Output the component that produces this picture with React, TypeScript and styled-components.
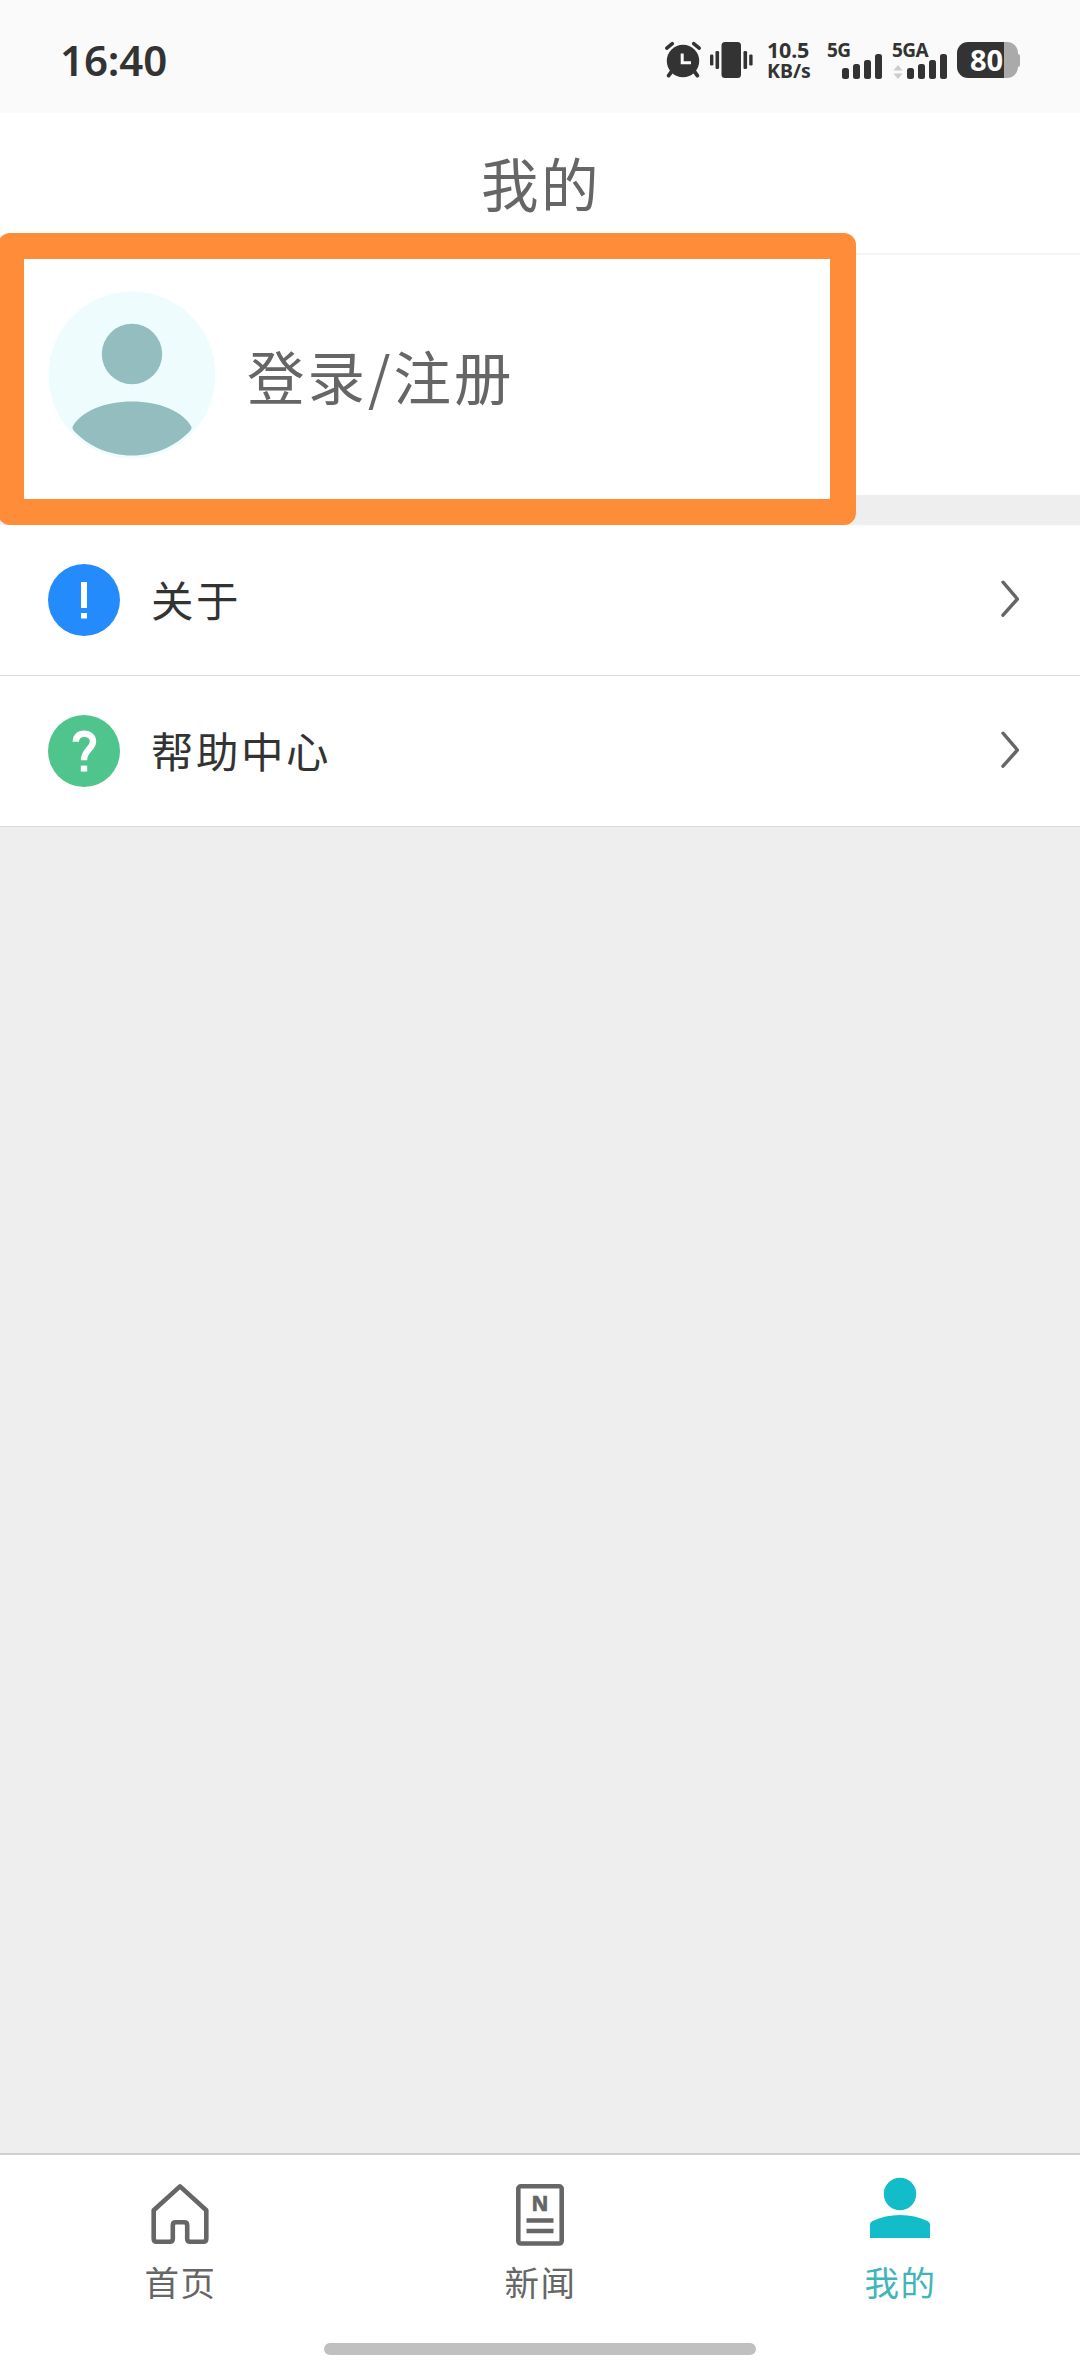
import React from 'react';
import styled, { createGlobalStyle } from 'styled-components';

const GlobalStyle = createGlobalStyle`
  * { box-sizing: border-box; }
  body {
    margin: 0;
    background: #eeeeee;
    font-family: 'Noto Sans CJK SC', 'Noto Sans', sans-serif;
  }
`;

const Screen = styled.div`
  display: flex;
  flex-direction: column;
  width: 1080px;
  height: 2376px;
  background: #eeeeee;
  overflow: hidden;
`;

const StatusBar = styled.div`
  display: flex;
  align-items: center;
  justify-content: space-between;
  height: 113px;
  padding: 7px 60px 0 60px;
  background: #fafafa;
  color: #333333;
  font-family: 'Noto Sans', sans-serif;
`;

const Clock = styled.div`
  font-size: 42px;
  font-weight: 600;
  line-height: 60px;
  letter-spacing: -0.1px;
`;

const StatusIcons = styled.div`
  display: flex;
  align-items: center;
  height: 38px;
`;

const NetSpeed = styled.div`
  display: flex;
  flex-direction: column;
  width: 46px;
  margin-left: 14px;
  font-size: 19.5px;
  font-weight: 700;
  line-height: 21px;
  white-space: nowrap;
`;

const SpeedValue = styled.span`
  font-size: 21.5px;
  letter-spacing: -0.2px;
`;

const Signal = styled.div<{ $width: number; $gap: number }>`
  display: flex;
  flex-direction: column;
  width: ${(p) => p.$width}px;
  height: 38px;
  margin-left: ${(p) => p.$gap}px;
`;

const SignalLabel = styled.span`
  height: 11px;
  font-size: 19px;
  font-weight: 700;
  line-height: 18px;
  letter-spacing: -0.5px;
`;

const SignalBars = styled.div`
  display: flex;
  justify-content: flex-end;
  align-items: flex-end;
  gap: 4px;
  height: 27px;
`;

const Bar = styled.span<{ $height: number }>`
  width: 7px;
  height: ${(p) => p.$height}px;
  border-radius: 2.5px;
  background: #333333;
`;

const Battery = styled.div`
  display: flex;
  align-items: center;
  margin-left: 10px;
`;

const BatteryBody = styled.div`
  display: flex;
  align-items: center;
  justify-content: center;
  width: 61px;
  height: 36px;
  padding-right: 2px;
  border-radius: 11px;
  background: linear-gradient(to right, #333333 47px, #aaaaaa 47px);
  color: #ffffff;
  font-size: 29px;
  font-weight: 700;
  line-height: 36px;
`;

const BatteryCap = styled.span`
  width: 2px;
  height: 13px;
  border-radius: 0 2px 2px 0;
  background: #aaaaaa;
`;

const TitleBar = styled.header`
  display: flex;
  align-items: center;
  justify-content: center;
  height: 142px;
  padding: 0 0 2px 2px;
  border-bottom: 2px solid #f4f4f4;
  background: #ffffff;
  color: #666666;
  font-size: 57.5px;
  line-height: 84px;
  letter-spacing: 2.5px;
`;

const Profile = styled.section`
  position: relative;
  isolation: isolate;
  display: flex;
  align-items: center;
  height: 240px;
  padding: 0 48px;
  background: #ffffff;
`;

const ProfileName = styled.span`
  margin-left: 31px;
  color: #666666;
  font-size: 57.5px;
  line-height: 84px;
  letter-spacing: 3px;
`;

const Highlight = styled.div`
  position: absolute;
  z-index: -1;
  top: -22px;
  left: -2px;
  width: 858px;
  height: 292px;
  border: 26.5px solid #ff8c38;
  border-radius: 12px;
  background: #ffffff;
`;

const Menu = styled.nav`
  display: flex;
  flex-direction: column;
  margin-top: 30px;
`;

const MenuRow = styled.a`
  display: flex;
  align-items: center;
  height: 151px;
  padding: 0 60px 0 48px;
  border-bottom: 1.5px solid #dcdcdc;
  background: #ffffff;
  color: #333333;
`;

const MenuLabel = styled.span`
  flex: 1;
  margin-left: 31px;
  padding-bottom: 2px;
  font-size: 42.5px;
  line-height: 60px;
  letter-spacing: 2.5px;
`;

const TabBar = styled.footer`
  display: grid;
  grid-template-columns: repeat(3, 1fr);
  grid-template-rows: 188px 12px;
  height: 223px;
  margin-top: auto;
  border-top: 2px solid #cfcfcf;
  background: #ffffff;
`;

const Tab = styled.a<{ $active?: boolean }>`
  display: flex;
  flex-direction: column;
  align-items: center;
  padding-top: 21px;
  color: ${(p) => (p.$active ? '#12bcc8' : '#666666')};
`;

const TabLabel = styled.span<{ $active?: boolean }>`
  margin-top: 8px;
  padding-left: 1px;
  color: ${(p) => (p.$active ? '#3fb5b8' : '#666666')};
  font-size: 34.5px;
  line-height: 50px;
  letter-spacing: 1.5px;
`;

const HomeIndicator = styled.div`
  grid-column: 1 / -1;
  justify-self: center;
  width: 432px;
  height: 12px;
  border-radius: 6px;
  background: #c0c0c0;
`;

const AlarmIcon = () => (
  <svg width="38" height="38" viewBox="0 0 38 38">
    <g stroke="#333" strokeLinecap="round" fill="none">
      <path d="M2.8 7.2L8.3 2.6M35.2 7.2L29.7 2.6" strokeWidth="3.6" />
      <path d="M8 30L4.6 34.6M30 30L33.4 34.6" strokeWidth="3.8" />
    </g>
    <circle cx="19" cy="20" r="16.2" fill="#333" />
    <path d="M18.2 12.5V21.8H27" fill="none" stroke="#fafafa" strokeWidth="3" />
  </svg>
);

const VibrateSvg = styled.svg`
  margin-left: 7px;
`;

const VibrateIcon = () => (
  <VibrateSvg width="44" height="38" viewBox="0 0 44 38">
    <g fill="#333">
      <rect x="12.5" y="1" width="19.5" height="36" rx="3.5" />
      <rect x="6.5" y="10" width="3.6" height="18" rx="1.3" />
      <rect x="1" y="13.5" width="3.4" height="11" rx="1.3" />
      <rect x="34.5" y="10" width="3.6" height="18" rx="1.3" />
      <rect x="40.2" y="13.5" width="3.4" height="11" rx="1.3" />
    </g>
  </VibrateSvg>
);

const DataArrows = () => (
  <svg width="10" height="14" viewBox="0 0 10 14">
    <path d="M5 0L9.6 5.6H0.4ZM5 14L9.6 8.4H0.4Z" fill="#cccccc" />
  </svg>
);

const Avatar = () => (
  <svg width="168" height="168" viewBox="0 0 168 168">
    <circle cx="84" cy="84" r="83.5" fill="#effcfd" />
    <circle cx="84" cy="63" r="30.2" fill="#94bdc0" />
    <path
      d="M24.5 136C33 120 57 110.5 84 110.5S135 120 143.5 136Q144 138 142 140C128 155 107 164.5 84 164.5S40 155 26 140Q24 138 24.5 136Z"
      fill="#94bdc0"
    />
  </svg>
);

const AboutIcon = () => (
  <svg width="72" height="72" viewBox="0 0 72 72">
    <circle cx="36" cy="36" r="36" fill="#238bfc" />
    <path d="M33 18H39V44H33ZM33 49H39V54.500H33Z" fill="#fff" />
  </svg>
);

const HelpIcon = () => (
  <svg width="72" height="72" viewBox="0 0 72 72">
    <circle cx="36" cy="36" r="36" fill="#4fc48c" />
    <path
      d="M27.8 26.8C27.8 21.5 31 18.8 36.2 18.8C41.5 18.8 45 21.8 45 26.6C45 34.2 36 34.5 36 45.2"
      fill="none"
      stroke="#fff"
      strokeWidth="6.4"
    />
    <rect x="32.8" y="50.6" width="6.4" height="6" fill="#fff" />
  </svg>
);

const Chevron = () => (
  <svg width="20" height="40" viewBox="0 0 20 40">
    <path
      d="M3 2.2L17.4 19L3 35.2"
      fill="none"
      stroke="#666"
      strokeWidth="3.4"
      strokeLinecap="round"
      strokeLinejoin="round"
    />
  </svg>
);

const HomeIcon = () => (
  <svg width="72" height="72" viewBox="0 0 72 72">
    <path
      d="M36 10.4L62.3 34.2V62.8Q62.3 65.8 59.3 65.8H46.2Q43.2 65.8 43.2 62.8V49.2Q43.2 46.2 40.2 46.2H31.8Q28.8 46.2 28.8 49.2V62.8Q28.8 65.8 25.800 65.8H12.7Q9.7 65.8 9.7 62.8V34.2Z"
      fill="none"
      stroke="currentColor"
      strokeWidth="4.6"
      strokeLinejoin="round"
    />
  </svg>
);

const NewsIcon = () => (
  <svg width="72" height="72" viewBox="0 0 72 72">
    <rect x="14.3" y="10.3" width="43.4" height="57.2" rx="2.5" fill="none" stroke="currentColor" strokeWidth="4.6" />
    <path d="M22.5 44.5H49.5M22.5 55H49.5" stroke="currentColor" strokeWidth="4.6" />
    <text
      x="36"
      y="34.8"
      textAnchor="middle"
      fontFamily="'Noto Sans', sans-serif"
      fontSize="20.5"
      fontWeight="800"
      fill="currentColor"
      stroke="currentColor"
      strokeWidth="0.5"
    >
      N
    </text>
  </svg>
);

const MeIcon = () => (
  <svg width="72" height="72" viewBox="0 0 72 72">
    <circle cx="36" cy="18" r="16.2" fill="currentColor" />
    <path d="M6 48.5Q6 46 8.5 45Q21 39 36 39T63.5 45Q66 46 66 48.5V62H6Z" fill="currentColor" />
  </svg>
);

const barHeights = [11, 15, 19, 25];

const SignalMeter = ({ label, width, gap, arrows }: { label: string; width: number; gap: number; arrows?: boolean }) => (
  <Signal $width={width} $gap={gap}>
    <SignalLabel>{label}</SignalLabel>
    <SignalBars>
      {arrows && <DataArrows />}
      {barHeights.map((h) => (
        <Bar key={h} $height={h} />
      ))}
    </SignalBars>
  </Signal>
);

const menu = [
  { label: '关于', Icon: AboutIcon },
  { label: '帮助中心', Icon: HelpIcon },
];

const tabs = [
  { label: '首页', Icon: HomeIcon },
  { label: '新闻', Icon: NewsIcon },
  { label: '我的', Icon: MeIcon, active: true },
];

export default function App() {
  return (
    <Screen>
      <GlobalStyle />
      <StatusBar>
        <Clock>16:40</Clock>
        <StatusIcons>
          <AlarmIcon />
          <VibrateIcon />
          <NetSpeed>
            <SpeedValue>10.5</SpeedValue>
            <span>KB/s</span>
          </NetSpeed>
          <SignalMeter label="5G" width={55} gap={14} />
          <SignalMeter label="5GA" width={55} gap={10} arrows />
          <Battery>
            <BatteryBody>80</BatteryBody>
            <BatteryCap />
          </Battery>
        </StatusIcons>
      </StatusBar>
      <TitleBar>我的</TitleBar>
      <Profile>
        <Avatar />
        <ProfileName>登录/注册</ProfileName>
        <Highlight />
      </Profile>
      <Menu>
        {menu.map(({ label, Icon }) => (
          <MenuRow key={label}>
            <Icon />
            <MenuLabel>{label}</MenuLabel>
            <Chevron />
          </MenuRow>
        ))}
      </Menu>
      <TabBar>
        {tabs.map(({ label, Icon, active }) => (
          <Tab key={label} $active={active}>
            <Icon />
            <TabLabel $active={active}>{label}</TabLabel>
          </Tab>
        ))}
        <HomeIndicator />
      </TabBar>
    </Screen>
  );
}
